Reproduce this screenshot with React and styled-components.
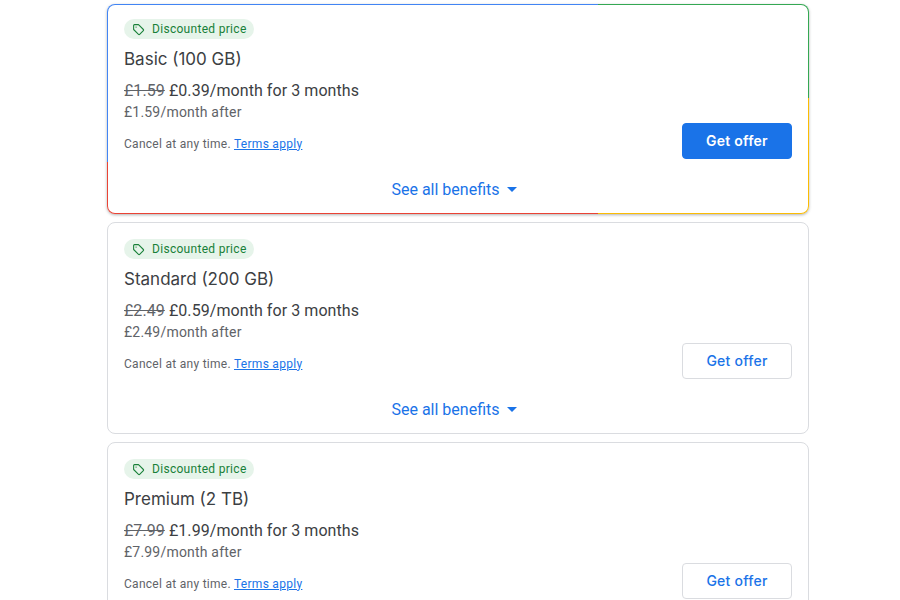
import React from 'react';
import styled, { createGlobalStyle } from 'styled-components';

const GlobalStyle = createGlobalStyle`
  html, body {
    margin: 0;
    height: 600px;
    overflow: hidden;
    background: #fff;
  }
  body {
    font-family: Roboto, "Liberation Sans", sans-serif;
  }
`;

const Page = styled.main`
  width: 702px;
  margin: 0 0 0 107px;
  padding: 4px 0 0;
  display: flex;
  flex-direction: column;
  gap: 8px;
`;

const Card = styled.section`
  box-sizing: border-box;
  height: ${({ $featured }) => ($featured ? '210px' : '212px')};
  padding: ${({ $featured }) => ($featured ? '14px 16px 0' : '16px 16px 0')};
  border: 1px solid ${({ $featured }) => ($featured ? 'transparent' : '#dadce0')};
  border-radius: 8px;
  background: ${({ $featured }) =>
    $featured
      ? `linear-gradient(#fff, #fff) padding-box,
         conic-gradient(at 491px 105px, #34a853 0 87deg, #fbbc04 87deg 180deg, #ea4335 180deg 263.8deg, #4285f4 263.8deg) border-box`
      : `#fff`};
  box-shadow: ${({ $featured }) => ($featured ? '0 1px 3px rgba(60, 64, 67, 0.4)' : 'none')};
`;

const Badge = styled.div`
  display: inline-flex;
  align-items: center;
  height: 20px;
  padding: 0 7px 0 8px;
  gap: 7px;
  border-radius: 10px;
  background: #e6f4ea;
  color: #188038;
  font-size: 12px;
  letter-spacing: 0.3px;
`;

const Title = styled.h2`
  margin: 7px 0 0;
  font-family: Inter, Roboto, sans-serif;
  font-size: 17px;
  line-height: 24px;
  font-weight: 400;
  color: #3c4043;
`;

const PriceLine = styled.p`
  margin: 8px 0 0;
  font-size: 16px;
  line-height: 24px;
  letter-spacing: 0.07px;
  color: #3c4043;
`;

const OldPrice = styled.s`
  color: #5f6368;
`;

const AfterLine = styled.p`
  margin: -1px 0 0;
  font-size: 14px;
  line-height: 20px;
  letter-spacing: 0.2px;
  color: #5f6368;
`;

const FooterRow = styled.div`
  display: flex;
  align-items: center;
  justify-content: space-between;
  margin-top: 1px;
`;

const Terms = styled.p`
  margin: 0;
  padding-top: 6px;
  font-size: 12px;
  letter-spacing: 0.28px;
  color: #5f6368;
  a {
    color: #1a73e8;
  }
`;

const OfferButton = styled.button`
  box-sizing: border-box;
  width: 110px;
  height: 36px;
  border-radius: 4px;
  border: 1px solid ${({ $primary }) => ($primary ? '#1a73e8' : '#dadce0')};
  background: ${({ $primary }) => ($primary ? '#1a73e8' : '#fff')};
  color: ${({ $primary }) => ($primary ? '#fff' : '#1a73e8')};
  font-family: Inter, Roboto, sans-serif;
  font-size: 14px;
  font-weight: ${({ $primary }) => ($primary ? 600 : 500)};
  letter-spacing: 0.25px;
`;

const BenefitsRow = styled.div`
  display: flex;
  align-items: center;
  justify-content: center;
  gap: 7px;
  margin-top: 19px;
  padding-right: 8px;
  color: #1a73e8;
  font-size: 16px;
  line-height: 24px;
`;

const TagIcon = () => (
  <svg width="13" height="13" viewBox="0 0 24 24" fill="none" stroke="currentColor" strokeWidth="2" strokeLinejoin="round">
    <path d="M3 4.5A1.5 1.5 0 0 1 4.5 3H12l9 9a1.5 1.5 0 0 1 0 2.1L14.1 21a1.5 1.5 0 0 1-2.1 0l-9-9z" />
    <circle cx="7.5" cy="7.5" r="1.2" fill="currentColor" stroke="none" />
  </svg>
);

const Caret = () => (
  <svg width="10" height="5" viewBox="0 0 10 5" fill="currentColor">
    <path d="M0 0h10L5 5z" />
  </svg>
);

// the third card runs off the bottom of the window, so its benefits link is not shown
const plans = [
  { name: 'Basic (100 GB)', was: '£1.59', now: '£0.39', featured: true, benefits: true },
  { name: 'Standard (200 GB)', was: '£2.49', now: '£0.59', benefits: true },
  { name: 'Premium (2 TB)', was: '£7.99', now: '£1.99' },
];

const App = () => (
  <>
    <GlobalStyle />
    <Page>
      {plans.map((plan) => (
        <Card key={plan.name} $featured={plan.featured}>
          <Badge>
            <TagIcon />
            Discounted price
          </Badge>
          <Title>{plan.name}</Title>
          <PriceLine>
            <OldPrice>{plan.was}</OldPrice> {plan.now}/month for 3 months
          </PriceLine>
          <AfterLine>{plan.was}/month after</AfterLine>
          <FooterRow>
            <Terms>
              Cancel at any time. <a href="#terms">Terms apply</a>
            </Terms>
            <OfferButton $primary={plan.featured}>Get offer</OfferButton>
          </FooterRow>
          {plan.benefits && (
            <BenefitsRow>
              See all benefits
              <Caret />
            </BenefitsRow>
          )}
        </Card>
      ))}
    </Page>
  </>
);

export default App;
